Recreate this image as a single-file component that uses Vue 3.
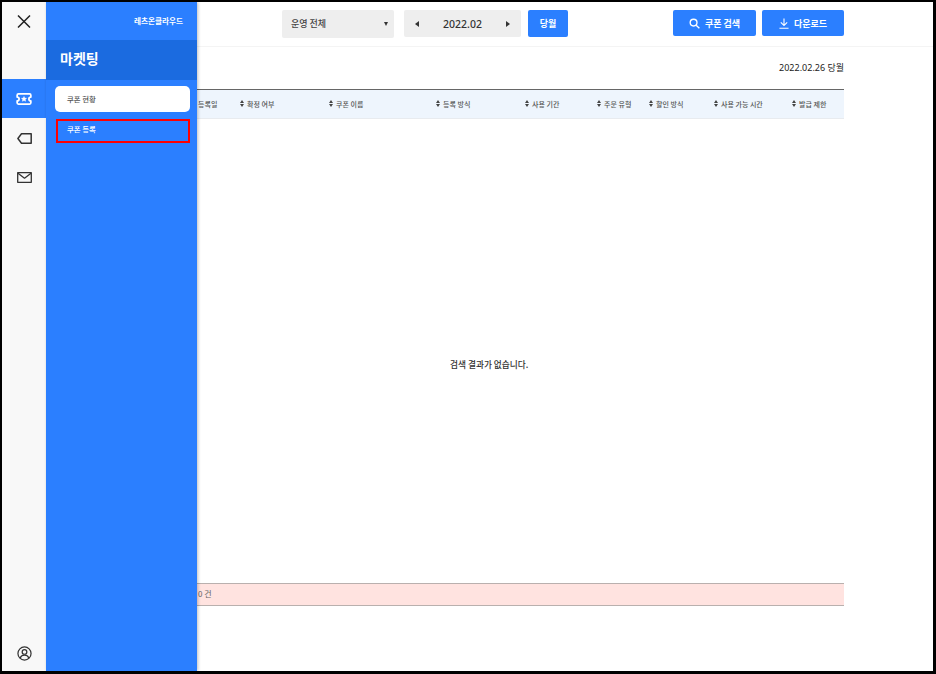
<script setup>
const columns = [
  { label: '등록일', width: 43, sort: false },
  { label: '확정 여부', width: 89, sort: true },
  { label: '쿠폰 이름', width: 107, sort: true },
  { label: '등록 방식', width: 89, sort: true },
  { label: '사용 기간', width: 72, sort: true },
  { label: '주문 유형', width: 52, sort: true },
  { label: '할인 방식', width: 65, sort: true },
  { label: '사용 가능 시간', width: 78, sort: true },
  { label: '발급 제한', width: 52, sort: true }
]
</script>

<template>
  <div class="frame">
    <aside class="rail">
      <div class="close-cell">
        <svg width="14" height="13" viewBox="0 0 14 13" fill="none" stroke="#222" stroke-width="1.5"><path d="M1 .5l12 12M13 .5l-12 12"/></svg>
      </div>
      <div class="rail-item active">
        <svg width="16" height="12" viewBox="0 0 18 14" fill="none" stroke="#fff" stroke-width="2" stroke-linejoin="round"><path d="M2.500 1h13A1.500 1.500 0 0 1 17 2.500v2.200a2.300 2.300 0 0 0 0 4.600v2.200a1.500 1.500 0 0 1-1.500 1.500h-13A1.500 1.500 0 0 1 1 11.500V9.300a2.300 2.300 0 0 0 0-4.600V2.500A1.500 1.500 0 0 1 2.500 1z"/><path d="M9 4l.9 1.900 2.100.3-1.500 1.400.4 2.100L9 8.700l-1.900 1 .4-2.100L6 6.200l2.100-.3z" fill="#fff" stroke-width=".5"/></svg>
      </div>
      <div class="rail-item lower">
        <svg width="15" height="11" viewBox="0 0 15 11" fill="none" stroke="#333" stroke-width="1.500" stroke-linejoin="round"><path d="M4.500 .8h9.700v9.400H4.500L.9 5.500z"/></svg>
      </div>
      <div class="rail-item lower">
        <svg width="15" height="11" viewBox="0 0 15 11" fill="none" stroke="#333" stroke-width="1.300" stroke-linejoin="round"><rect x=".7" y=".7" width="13.600" height="9.600"/><path d="M1 1.200l6.500 5 6.500-5"/></svg>
      </div>
      <div class="rail-spacer"></div>
      <div class="user-cell">
        <svg width="15" height="15" viewBox="0 0 16 16" fill="none" stroke="#333" stroke-width="1.300"><circle cx="8" cy="8" r="7"/><circle cx="8" cy="6.300" r="2.500"/><path d="M3.400 12.800c.8-2 2.600-3 4.600-3s3.800 1 4.600 3"/></svg>
      </div>
    </aside>

    <nav class="panel">
      <div class="brand">레츠온클라우드</div>
      <div class="panel-title">마켓팅</div>
      <ul class="menu">
        <li class="menu-item selected">쿠폰 현황</li>
        <li class="menu-item outlined">쿠폰 등록</li>
      </ul>
    </nav>

    <main class="main">
      <header class="topbar">
        <div class="select-box">
          <span>운영 전체</span>
          <span class="caret"></span>
        </div>
        <div class="date-box">
          <span class="tri left"></span>
          <span class="date-text">2022.02</span>
          <span class="tri right"></span>
        </div>
        <button class="btn month">당월</button>
        <div class="grow"></div>
        <button class="btn search">
          <svg width="11" height="11" viewBox="0 0 12 12" fill="none" stroke="#fff" stroke-width="1.500"><circle cx="5" cy="5" r="3.700"/><path d="M7.800 7.800l3.500 3.500"/></svg>
          쿠폰 검색
        </button>
        <button class="btn download">
          <svg width="10" height="11" viewBox="0 0 11 12" fill="none" stroke="#fff" stroke-width="1.200"><path d="M5.500 .5v7.500M2 4.800l3.500 3.500L9 4.800M.5 11.300h10"/></svg>
          다운로드
        </button>
      </header>

      <section class="content">
        <div class="as-of">2022.02.26 당월</div>
        <div class="thead">
          <div v-for="col in columns" :key="col.label" class="th" :style="{ width: col.width + 'px' }">
            <span v-if="col.sort" class="sort"><i class="up"></i><i class="down"></i></span>
            <span>{{ col.label }}</span>
          </div>
        </div>
        <div class="empty">검색 결과가 없습니다.</div>
        <div class="summary">0 건</div>
      </section>
    </main>
  </div>
</template>

<style>
html, body { margin: 0; padding: 0; }
</style>

<style scoped>
.frame {
  width: 936px;
  height: 674px;
  box-sizing: border-box;
  border: 2px solid #000;
  border-right-width: 3px;
  border-bottom-width: 3px;
  display: flex;
  overflow: hidden;
  background: #fff;
  font-family: "Noto Sans CJK KR", "Noto Sans", sans-serif;
  color: #333;
}
.rail {
  width: 44px;
  flex: none;
  background: #f8f8f8;
  display: flex;
  flex-direction: column;
}
.close-cell { height: 38px; margin-bottom: 39px; display: flex; align-items: center; justify-content: center; }
.rail-item { height: 39px; box-sizing: border-box; display: flex; align-items: center; justify-content: center; }
.rail-item.lower { padding-top: 2px; }
.rail-item.active { background: #2b7fff; }
.rail-spacer { flex: 1; }
.user-cell { height: 36px; display: flex; align-items: center; justify-content: center; }

.panel {
  width: 151px;
  flex: none;
  background: #2b7fff;
  color: #fff;
  box-shadow: 1px 0 3px rgba(0, 0, 0, .25);
  position: relative;
  z-index: 1;
}
.brand {
  height: 38px;
  box-sizing: border-box;
  padding-right: 14px;
  text-align: right;
  font-size: 7.600px;
  font-weight: 700;
  line-height: 37px;
}
.panel-title {
  height: 40px;
  box-sizing: border-box;
  padding-left: 14px;
  background: #1b6be0;
  font-size: 14px;
  font-weight: 700;
  line-height: 37px;
}
.menu { list-style: none; margin: 6px 0 0; padding: 0 7px 0 9px; }
.menu-item {
  height: 26px;
  box-sizing: border-box;
  border-radius: 5px;
  padding-left: 12px;
  font-size: 7.400px;
  font-weight: 500;
  line-height: 25px;
}
.menu-item.selected { background: #fff; color: #555; }
.menu-item.outlined {
  margin: 7px 0 0 1px;
  border: 2px solid #f00;
  border-radius: 0;
  padding-left: 9px;
  line-height: 16px;
  height: 24px;
}

.main { flex: 1; min-width: 0; }
.topbar {
  height: 45px;
  box-sizing: border-box;
  border-bottom: 1px solid #f4f4f4;
  padding: 8px 89px 0 85px;
  display: flex;
  align-items: flex-start;
}
.select-box {
  width: 112px;
  height: 28px;
  box-sizing: border-box;
  padding: 0 6px 2px 9px;
  background: #eee;
  border-radius: 2px;
  display: flex;
  align-items: center;
  justify-content: space-between;
  font-size: 9px;
  font-weight: 500;
  color: #444;
}
.caret { width: 0; height: 0; margin-top: 2px; border-left: 2.500px solid transparent; border-right: 2.500px solid transparent; border-top: 4px solid #333; }
.date-box {
  width: 117px;
  height: 27px;
  margin-left: 10px;
  padding: 0 11px;
  box-sizing: border-box;
  background: #eee;
  border-radius: 2px;
  display: flex;
  align-items: center;
  justify-content: space-between;
}
.date-text { font-size: 10.500px; font-weight: 500; color: #333; font-family: "Noto Sans", sans-serif; }
.tri { width: 0; height: 0; border-top: 3px solid transparent; border-bottom: 3px solid transparent; }
.tri.left { border-right: 4px solid #333; }
.tri.right { border-left: 4px solid #333; }
.btn {
  height: 26px;
  border: 0;
  border-radius: 2px;
  background: #2b7fff;
  color: #fff;
  padding: 0;
  font: 700 9px "Noto Sans CJK KR", sans-serif;
  display: flex;
  align-items: center;
  justify-content: center;
  gap: 5px;
}
.month { width: 40px; margin-left: 7px; height: 27px; }
.grow { flex: 1; }
.search { width: 83px; }
.download { width: 82px; margin-left: 6px; }

.content {
  width: 647px;
  height: 625px;
  display: flex;
  flex-direction: column;
}
.as-of {
  height: 42px;
  box-sizing: border-box;
  padding-top: 13px;
  text-align: right;
  font-size: 9px;
  font-weight: 400;
  line-height: 16px;
  color: #222;
  font-family: "Noto Sans", "Noto Sans CJK KR", sans-serif;
}
.thead {
  height: 30px;
  box-sizing: border-box;
  border-top: 1px solid #666;
  border-bottom: 1px solid #e8ebef;
  background: #eef5fd;
  display: flex;
  align-items: center;
  flex: none;
}
.th {
  flex: none;
  display: flex;
  align-items: center;
  gap: 3px;
  padding-bottom: 1px;
  font-size: 7px;
  font-weight: 500;
  color: #555;
  white-space: nowrap;
  box-sizing: border-box;
}
.th:first-child { padding-left: 1px; }
.sort { display: flex; flex-direction: column; gap: 1px; }
.sort i { display: block; width: 0; height: 0; border-left: 2.500px solid transparent; border-right: 2.500px solid transparent; }
.sort .up { border-bottom: 3px solid #444; }
.sort .down { border-top: 3px solid #444; }
.empty {
  height: 464px;
  box-sizing: border-box;
  padding: 236px 0 0 253px;
  font-size: 8.700px;
  font-weight: 500;
  line-height: 20px;
  color: #333;
}
.summary {
  height: 23px;
  box-sizing: border-box;
  border-top: 1px solid #b9b0ae;
  border-bottom: 1px solid #b9b0ae;
  background: #ffe3e0;
  padding-left: 1px;
  font-size: 8px;
  line-height: 20px;
  color: #666;
}
</style>
